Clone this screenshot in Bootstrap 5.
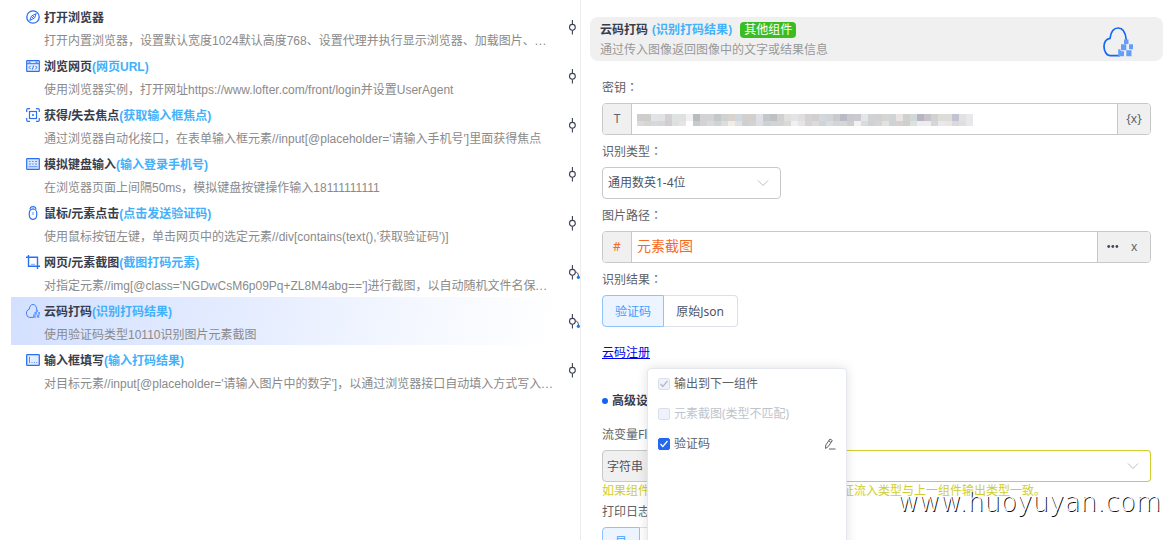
<!DOCTYPE html>
<html lang="zh-CN">
<head>
<meta charset="utf-8">
<title>流程编辑</title>
<link href="https://cdn.jsdelivr.net/npm/bootstrap@5.3.0/dist/css/bootstrap.min.css" rel="stylesheet">
<style>
body{font-family:"Liberation Sans","Noto Sans CJK SC",sans-serif;font-size:12px;line-height:18px;color:#606266;background:#fff}
.app{width:1170px;height:540px}
.flow{width:580px;padding:3px 0 0 11px}
.step{height:48px;margin-bottom:1px;padding-left:15px}
.step.on{background:linear-gradient(100deg,#d3e0ff 0%,#e4ecff 40%,#f5f8ff 72%,#fff 95%)}
.step-main{width:531px;padding-top:6px;white-space:nowrap}
.step-name{color:#373d4d;font-weight:700;height:18px}
.step-name span,.hint-blue{color:#42b0fb}
.step-desc{padding-left:18px;color:#8a8a8a;height:18px;margin-top:5px}
.dots{letter-spacing:.7px}
.step-icon{width:14px;height:14px;margin-right:4px;flex:none;position:relative;top:-1px}
.node{width:16px;height:16px;margin-left:8px;flex:none;overflow:visible}
.side{width:590px;border-left:1px solid #ececec;padding:17px 7px 0 9px;font-family:"Noto Sans","Noto Sans CJK SC",sans-serif;position:relative}
.head{height:44px;background:#f0f0f0;border-radius:8px;padding:3px 30px 0 10px}
.head-name{color:#373d4d;font-weight:700;height:19px}
.tagx{background:#3bbd22;color:#fff;border-radius:4px;height:16px;line-height:16px;padding:0 4px;font-weight:400;margin-left:8px}
.fields{padding:10px 12px 0}
.lab{height:32px;line-height:34px}
.colon{font-family:"Noto Sans CJK TC",sans-serif;line-height:1}
.box{height:32px;border:1px solid #c8c8c8;border-radius:4px;overflow:hidden;background:#fff}
.cap{background:#f0f0f0;height:100%}
.capl{width:29px;border-right:1px solid #c8c8c8;flex:none}
.capr{border-left:1px solid #c8c8c8;flex:none}
.seg{height:32px;border:1px solid #dcdfe6;color:#4d5464}
.seg.on{background:#ecf4ff;border-color:#8fc4fb;color:#409eff;border-radius:4px 0 0 4px}
.seg.off{border-left:0;border-radius:0 4px 4px 0}
.typecap{width:100px;height:32px;background:#f0f0f0;border:1px solid #c8c8c8;border-radius:4px 0 0 4px;padding:1px 0 0 4px;color:#4d5464}
.typebox{height:32px;border:1px solid #cfce2c;border-left:0;border-radius:0 4px 4px 0;padding-right:11px}
.reg{color:#00e;text-decoration:underline}
.warn{color:#cfce2c}
.pop{left:66px;top:368px;width:200px;height:190px;background:#fff;border:1px solid #e4e7ed;border-radius:4px;box-shadow:0 0 12px rgba(0,0,0,.12);padding:0 10px}
.pop-row{height:30px}
.cb{width:12px;height:12px;border-radius:2px;border:1px solid #dcdfe6;background:#edf2fc;margin-right:4px;flex:none}
.cb.on{background:#2468f2;border-color:#2468f2}
.wm{right:9px;top:484px;font:200 26px/36px "DejaVu Sans",sans-serif;letter-spacing:.1px;color:#fff;text-shadow:1px 1px 0 #111;white-space:nowrap}
</style>
</head>
<body class="overflow-hidden">
<svg class="d-none">
<symbol id="node" viewBox="0 0 16 16"><path d="M8.400 1v4.400M8.400 11.200v4.400" stroke="#3d4354" stroke-width="1.100"/><circle cx="8.400" cy="8.300" r="2.900" fill="#fff" stroke="#3d4354" stroke-width="1.100"/></symbol>
<symbol id="cloud" viewBox="0 0 30 30"><path d="M17 28.700H7.500C3.400 28.700 1 24 1 19.500 1 15 3.500 12 7 11.300 7.800 5 10.500 1 15.200 1 19.500 1 22.500 5 23.200 12.500V17" fill="none" stroke="#1566f5" stroke-width="1.700"/><g fill="#669dfb"><path d="M21 12.500h4.500v4.400H21zM18 17.200h5.300v6H18zM26 17.300h4v5h-4zM23.300 23.300h5.200v6h-5.200zM15.200 22.200h2l.8 2h3v5h-5.800z"/></g></symbol>
</svg>
<div class="app d-flex overflow-hidden">
<main class="flow">
 <div class="step d-flex align-items-center"><div class="step-main align-self-start"><div class="step-name d-flex align-items-center"><svg class="step-icon" viewBox="0 0 14 14" fill="none" stroke="#2a70f5"><circle cx="7" cy="7" r="6.200" stroke-width="1.300"/><path d="M10.200 3.600 8.600 8 3.800 10.400 5.500 6z"/><path d="m6 8 2-2"/></svg>打开浏览器</div><div class="step-desc">打开内置浏览器，设置默认宽度1024默认高度768、设置代理并执行显示浏览器、加载图片、<span class="dots">...</span></div></div><svg class="node"><use href="#node"/></svg></div>
 <div class="step d-flex align-items-center"><div class="step-main align-self-start"><div class="step-name d-flex align-items-center"><svg class="step-icon" viewBox="0 0 14 14" fill="none" stroke="#2a70f5"><rect x=".7" y="1.700" width="12.600" height="10.600" rx=".6" fill="#e3edff" stroke-width="1.200"/><path d="M1 4.700h12M2.500 3.200h2m5 0h2" stroke-width="1"/><path d="m4.700 6.800-1.700 1.700 1.700 1.700m4.600-3.400 1.700 1.700-1.700 1.700M7.600 6.500l-1.200 4"/></svg>浏览网页<span>(网页URL)</span></div><div class="step-desc">使用浏览器实例，打开网址https://www.lofter.com/front/login并设置UserAgent</div></div><svg class="node"><use href="#node"/></svg></div>
 <div class="step d-flex align-items-center"><div class="step-main align-self-start"><div class="step-name d-flex align-items-center"><svg class="step-icon" viewBox="0 0 14 14" fill="none" stroke="#2a70f5"><path d="M.7 4V2q0-1.300 1.300-1.300h2M10 .7h2q1.300 0 1.300 1.300v2M13.300 10v2q0 1.300-1.300 1.300h-2M4 13.300H2Q.7 13.300.7 12v-2" stroke-width="1.200"/><rect x="3.500" y="3.500" width="7" height="7" stroke-width="1.200"/><rect x="6" y="6" width="2" height="2" fill="#5b90f8" stroke="none"/></svg>获得/失去焦点<span>(获取输入框焦点)</span></div><div class="step-desc">通过浏览器自动化接口，在表单输入框元素//input[@placeholder='请输入手机号']里面获得焦点</div></div><svg class="node"><use href="#node"/></svg></div>
 <div class="step d-flex align-items-center"><div class="step-main align-self-start"><div class="step-name d-flex align-items-center"><svg class="step-icon" viewBox="0 0 14 14" fill="none" stroke="#2a70f5"><rect x=".7" y="1.700" width="12.600" height="10.600" rx=".6" fill="#d9e6ff" stroke-width="1.200"/><path d="M3 4.500h1.500M6 4.500h1.500M9 4.500h2M3 7h2m1.200 0h1.600M9 7h2M2.500 9.700h9" stroke="#5b90f8"/></svg>模拟键盘输入<span>(输入登录手机号)</span></div><div class="step-desc">在浏览器页面上间隔50ms，模拟键盘按键操作输入18111111111</div></div><svg class="node"><use href="#node"/></svg></div>
 <div class="step d-flex align-items-center"><div class="step-main align-self-start"><div class="step-name d-flex align-items-center"><svg class="step-icon" viewBox="0 0 14 14" fill="none" stroke="#2a70f5"><rect x="3.300" y="3" width="7.400" height="10.300" rx="3.700" stroke-width="1.200"/><path d="M4.200 3.500C3.800 1.500 5 .7 7 .7s3.200.8 2.800 2.800" stroke-width="1.200"/><path d="M7 2v2m0 2v3" stroke="#5b90f8"/></svg>鼠标/元素点击<span>(点击发送验证码)</span></div><div class="step-desc">使用鼠标按钮左键，单击网页中的选定元素//div[contains(text(),'获取验证码')]</div></div><svg class="node"><use href="#node"/></svg></div>
 <div class="step d-flex align-items-center"><div class="step-main align-self-start"><div class="step-name d-flex align-items-center"><svg class="step-icon" viewBox="0 0 14 14" fill="none" stroke="#2a70f5"><path d="M0 2.200h11.500V14M2.500 0v11.300H14" stroke-width="1.400"/><path d="M5 9.300h4" stroke="#7ba8fb"/></svg>网页/元素截图<span>(截图打码元素)</span></div><div class="step-desc">对指定元素//img[@class='NGDwCsM6p09Pq+ZL8M4abg==']进行截图，以自动随机文件名保<span class="dots">...</span></div></div><svg class="node"><use href="#node"/><path d="M11.400 8c2 .2 3 1.500 3 4" fill="none" stroke="#3d4354"/><circle cx="14.400" cy="13.300" r="1.600" fill="#1677f5"/></svg></div>
 <div class="step on d-flex align-items-center"><div class="step-main align-self-start"><div class="step-name d-flex align-items-center"><svg class="step-icon"><use href="#cloud"/></svg>云码打码<span>(识别打码结果)</span></div><div class="step-desc">使用验证码类型10110识别图片元素截图</div></div><svg class="node"><use href="#node"/><path d="M11.400 8c2 .2 3 1.500 3 4" fill="none" stroke="#3d4354"/><circle cx="14.400" cy="13.300" r="1.600" fill="#1677f5"/></svg></div>
 <div class="step d-flex align-items-center"><div class="step-main align-self-start"><div class="step-name d-flex align-items-center"><svg class="step-icon" viewBox="0 0 14 14" fill="none" stroke="#2a70f5"><rect x=".7" y="1.700" width="12.600" height="10.600" rx=".6" fill="#e3edff" stroke-width="1.300"/><path d="M3.500 3.700v6.500M5.500 9.500h1m1.500 0h1m1.200 0h1" stroke="#5b90f8"/></svg>输入框填写<span>(输入打码结果)</span></div><div class="step-desc">对目标元素//input[@placeholder='请输入图片中的数字']，以通过浏览器接口自动填入方式写入<span class="dots">...</span></div></div><svg class="node"><use href="#node"/></svg></div>
</main>
<aside class="side">
 <div class="head d-flex justify-content-between">
  <div><div class="head-name d-flex align-items-center">云码打码<span class="hint-blue ms-1">(识别打码结果)</span><span class="tagx">其他组件</span></div><div style="color:#999;padding-top:2px">通过传入图像返回图像中的文字或结果信息</div></div>
  <svg width="30" height="30" class="flex-shrink-0" style="margin-top:7px"><use href="#cloud" width="30" height="30"/></svg>
 </div>
 <div class="fields">
  <div class="lab">密钥<span class="colon" lang="zh-TW">：</span></div>
  <div class="box d-flex align-items-center"><div class="cap capl d-flex align-items-center justify-content-center">T</div><svg id="masked" class="ms-1" width="338" height="12" shape-rendering="crispEdges" style="margin-top:2px"></svg><div class="cap capr d-flex align-items-center justify-content-center ms-auto" style="width:33px">{x}</div></div>
  <div class="lab">识别类型<span class="colon" lang="zh-TW">：</span></div>
  <div class="box d-flex align-items-center justify-content-between" style="width:179px;color:#4d5464;padding:0 11px 0 5px">通用数英1-4位<svg width="12" height="8" fill="none" stroke="#b9bdc5"><path d="m1 1.500 5 5 5-5"/></svg></div>
  <div class="lab">图片路径<span class="colon" lang="zh-TW">：</span></div>
  <div class="box d-flex align-items-center"><div class="cap capl d-flex align-items-center justify-content-center" style="color:#f56a1e">#</div><span style="font-size:14px;color:#f56a1e;margin-left:5px;padding-bottom:2px">元素截图</span><div class="cap capr d-flex align-items-center ms-auto" style="width:53px;padding-left:9px"><svg width="12" height="4" fill="#41485a"><circle cx="1.700" cy="1.500" r="1.400"/><circle cx="5.800" cy="1.500" r="1.400"/><circle cx="9.900" cy="1.500" r="1.400"/></svg><span style="margin-left:12px">x</span></div></div>
  <div class="lab">识别结果<span class="colon" lang="zh-TW">：</span></div>
  <div class="d-flex"><div class="seg on d-flex align-items-center justify-content-center" style="width:62px;padding-top:1px">验证码</div><div class="seg off d-flex align-items-center justify-content-center" style="width:74px;padding:1px 1px 0 0">原始Json</div></div>
  <div style="padding-top:17px;height:64px"><a class="reg" href="#">云码注册</a></div>
  <div class="d-flex align-items-center fw-bold" style="height:20px;color:#373d4d"><svg width="6" height="6" style="margin-right:4px"><circle cx="3" cy="3" r="3" fill="#1162f5"/></svg>高级设置</div>
  <div class="lab" style="margin-top:7px">流变量Flow<span class="colon" lang="zh-TW">：</span></div>
  <div class="d-flex"><div class="typecap d-flex align-items-center">字符串</div><div class="typebox flex-grow-1 d-flex align-items-center justify-content-end"><svg width="12" height="8" fill="none" stroke="#b9bdc5"><path d="m1 1.500 5 5 5-5"/></svg></div></div>
  <div class="warn d-flex justify-content-between" style="width:444px;height:16px"><span>如果组件</span><span>证流入类型与上一组件输出类型一致。</span></div>
  <div style="height:29px;line-height:28px">打印日志<span class="colon" lang="zh-TW">：</span></div>
  <div class="d-flex"><div class="seg on d-flex align-items-center justify-content-center" style="width:38px">是</div><div class="seg off" style="width:38px"></div></div>
 </div>
 <div class="pop position-absolute">
  <div class="pop-row d-flex align-items-center"><svg class="cb" viewBox="0 0 10 10" fill="none" stroke="#b4bac5" stroke-width="1.200"><path d="m1.500 5 2.300 2.500L8.500 2"/></svg>输出到下一组件</div>
  <div class="pop-row d-flex align-items-center" style="color:#c0c4cc"><span class="cb"></span>元素截图(类型不匹配)</div>
  <div class="pop-row d-flex align-items-center"><svg class="cb on" viewBox="0 0 10 10" fill="none" stroke="#fff" stroke-width="1.200"><path d="m1.500 5 2.300 2.500L8.500 2"/></svg>验证码<svg class="ms-auto" width="12" height="12" fill="none" stroke="#606266"><path d="M1.500 10.500 1.800 7 6 1l2.300 1.500-4 6zM4.700 2.800 7 4.400M5 11h6.500"/></svg></div>
 </div>
</aside>
</div>
<div class="wm position-absolute">www.huoyuyan.com</div>
<script src="https://cdn.jsdelivr.net/npm/bootstrap@5.3.0/dist/js/bootstrap.bundle.min.js"></script>
<script>
// pixelated cover over the secret key: upper and lower row of cells
const rows = [
 'cfcccc cfcccc dfe5ea e2e2e2 d2d0d2 dde3e3 e0e0e0 f1f1f2 b9bcbf d3d3d5 d2d3d5 c5c8c9 d0d2d2 d8d3cf d2d8df d2cfcf d4cecf dde1e7 c4c8ca bdc1c3 d1d1d2 e2e0de e4e4e6 dfdfe2 d5d2d2 d3cfcf d3d8de d1d5d8 cbcbcf b8bbc6 c9c8ce cbcad1 e4e6e5 d1d2d3 d0d1d0 d5d5d5 cfd5d7 e8e4e3 d0d1ce d0d9d8 b7b5c3 c6c4c9 d2d1d2 dddcd6 dcdcd8 c0c3d0 e2e2e5 e8e8ea',
 'dddad9 d5d5d5 d8d8d9 dad6d8 d0ced1 dfdfdf e6e4e7 fff c9cacb d4d2d3 dbdad9 d1d3d3 ddddde f2ebe6 dfe0e3 cdd0d0 d2d4d4 dedee1 cdd1d3 d3d3d4 d2d3d4 d8dada eff0f5 e8e4e4 d5d3d5 dcdbdc d0d4d5 d6dde4 d5d5d6 d6d5d7 ccced0 f4f2f0 d8dce0 d1d1d1 d6d5d4 e0e3e2 d3d2d3 d5d1d1 cfcfcd dce2e4 ececf1 ececf1 d6d5d7 e8e9ec ebe4df dadade dedfe3 e8e8ea'
];
document.getElementById('masked').innerHTML = rows.map((r, j) => r.split(' ').map((c, i) =>
 `<rect x="${i * 7 + 1}" y="${j * 7}" width="7" height="${j ? 5 : 7}" fill="#${c}"/>`).join('')).join('');
</script>
</body>
</html>
